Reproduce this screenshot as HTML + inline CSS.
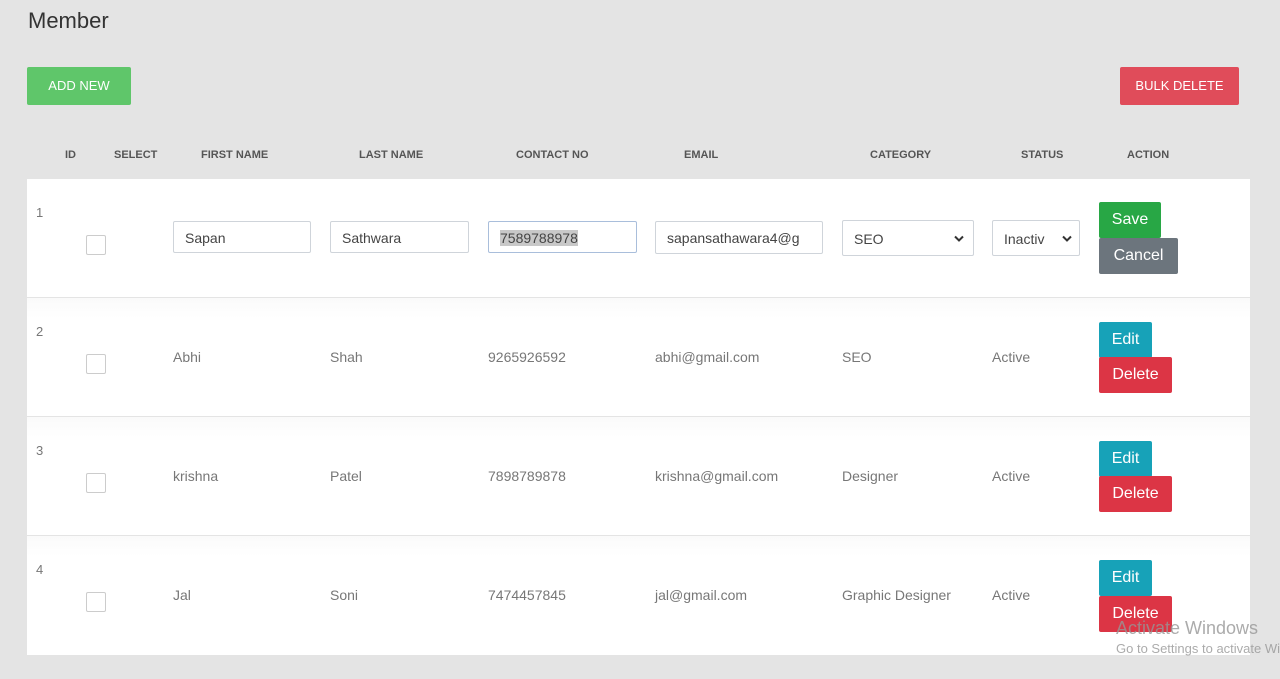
<!DOCTYPE html>
<html><head><style>
*{box-sizing:border-box;margin:0;padding:0}
body{width:1280px;height:679px;background:#e4e4e4;font-family:"Liberation Sans",sans-serif;position:relative;overflow:hidden;color:#6c6c6c}
.a{position:absolute}
h1{position:absolute;left:28px;top:8px;font-size:22px;font-weight:normal;color:#333}
.btn{position:absolute;color:#fff;font-size:13px;text-align:center;border-radius:2px}
.th{position:absolute;top:149px;font-size:11px;font-weight:bold;color:#555}
.row{position:absolute;left:27px;width:1223px;height:118px;background:#fff}
.row.b{background:linear-gradient(#fafafa,#fff 20px)}
.cell{position:absolute;font-size:14px;color:#777}
.cb{position:absolute;left:59px;width:20px;height:20px;border:1px solid #ccc;border-radius:2px;background:#fff}
.inp{position:absolute;top:42px;height:33px;border:1px solid #cfd4da;font-size:14px;color:#444;padding:8px 11px;white-space:nowrap;overflow:hidden;background:#fff;border-radius:2px}
.ab{position:absolute;left:1072px;color:#fff;font-size:16px;text-align:center;border-radius:2px;line-height:35px;height:36px}
.chev{position:absolute;top:14px;width:10px;height:7px}
</style></head><body>
<h1>Member</h1>
<div class="btn" style="left:27px;top:67px;width:104px;height:38px;line-height:38px;background:#5fc66a">ADD NEW</div>
<div class="btn" style="left:1120px;top:67px;width:119px;height:38px;line-height:38px;background:#e04c5a">BULK DELETE</div>
<div class="th" style="left:65px">ID</div>
<div class="th" style="left:114px">SELECT</div>
<div class="th" style="left:201px">FIRST NAME</div>
<div class="th" style="left:359px">LAST NAME</div>
<div class="th" style="left:516px">CONTACT NO</div>
<div class="th" style="left:684px">EMAIL</div>
<div class="th" style="left:870px">CATEGORY</div>
<div class="th" style="left:1021px">STATUS</div>
<div class="th" style="left:1127px">ACTION</div>

<div class="row" style="top:179px">
<div class="cell" style="left:9px;top:26px;font-size:13px">1</div>
<div class="cb" style="top:56px"></div>
<div class="inp" style="left:146px;width:138px;height:32px">Sapan</div>
<div class="inp" style="left:303px;width:139px;height:32px">Sathwara</div>
<div class="inp" style="left:461px;width:149px;height:32px;border-color:#a9bedb"><span style="background:#c8c8c8">7589788978</span></div>
<div class="inp" style="left:628px;width:168px;height:33px">sapansathawara4@g</div>
<div class="inp" style="left:815px;top:41px;width:132px;height:36px;padding-top:10px">SEO<svg class="chev" style="right:9px" viewBox="0 0 10 7"><path d="M1 1.5L5 5.5L9 1.5" stroke="#333" stroke-width="2" fill="none"/></svg></div>
<div class="inp" style="left:965px;top:41px;width:88px;height:36px;padding-top:10px;padding-right:28px">Inactiv<svg class="chev" style="right:7px" viewBox="0 0 10 7"><path d="M1 1.5L5 5.5L9 1.5" stroke="#333" stroke-width="2" fill="none"/></svg></div>
<div class="ab" style="top:23px;width:62px;background:#28a745">Save</div>
<div class="ab" style="top:59px;width:79px;background:#6c757d">Cancel</div>
</div>

<div class="row b" style="top:298px">
<div class="cell" style="left:9px;top:26px;font-size:13px">2</div>
<div class="cb" style="top:56px"></div>
<div class="cell" style="left:146px;top:51px">Abhi</div>
<div class="cell" style="left:303px;top:51px">Shah</div>
<div class="cell" style="left:461px;top:51px">9265926592</div>
<div class="cell" style="left:628px;top:51px">abhi@gmail.com</div>
<div class="cell" style="left:815px;top:51px">SEO</div>
<div class="cell" style="left:965px;top:51px">Active</div>
<div class="ab" style="top:24px;width:53px;background:#17a2b8">Edit</div>
<div class="ab" style="top:59px;width:73px;background:#dc3545">Delete</div>
</div>

<div class="row b" style="top:417px">
<div class="cell" style="left:9px;top:26px;font-size:13px">3</div>
<div class="cb" style="top:56px"></div>
<div class="cell" style="left:146px;top:51px">krishna</div>
<div class="cell" style="left:303px;top:51px">Patel</div>
<div class="cell" style="left:461px;top:51px">7898789878</div>
<div class="cell" style="left:628px;top:51px">krishna@gmail.com</div>
<div class="cell" style="left:815px;top:51px">Designer</div>
<div class="cell" style="left:965px;top:51px">Active</div>
<div class="ab" style="top:24px;width:53px;background:#17a2b8">Edit</div>
<div class="ab" style="top:59px;width:73px;background:#dc3545">Delete</div>
</div>

<div class="row b" style="top:536px;height:119px">
<div class="cell" style="left:9px;top:26px;font-size:13px">4</div>
<div class="cb" style="top:56px"></div>
<div class="cell" style="left:146px;top:51px">Jal</div>
<div class="cell" style="left:303px;top:51px">Soni</div>
<div class="cell" style="left:461px;top:51px">7474457845</div>
<div class="cell" style="left:628px;top:51px">jal@gmail.com</div>
<div class="cell" style="left:815px;top:51px">Graphic Designer</div>
<div class="cell" style="left:965px;top:51px">Active</div>
<div class="ab" style="top:24px;width:53px;background:#17a2b8">Edit</div>
<div class="ab" style="top:60px;width:73px;background:#dc3545">Delete</div>
</div>

<div class="a" style="left:1116px;top:618px;font-size:18px;color:rgba(150,150,150,0.8);white-space:nowrap">Activate Windows</div>
<div class="a" style="left:1116px;top:641px;font-size:13px;color:rgba(150,150,150,0.8);white-space:nowrap">Go to Settings to activate Windows.</div>
</body></html>
